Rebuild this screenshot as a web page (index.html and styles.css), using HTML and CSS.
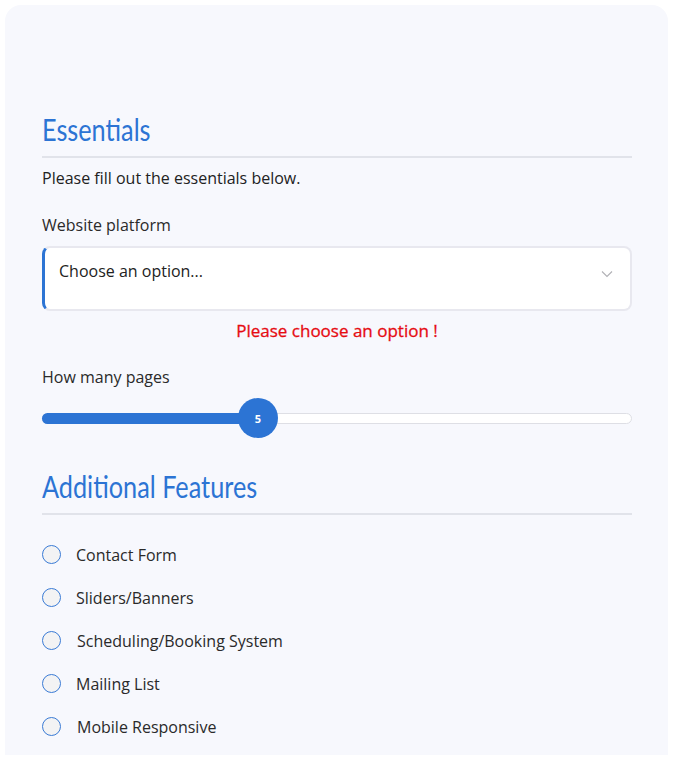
FILE: index.html
```html
<!DOCTYPE html>
<html>
<head>
<meta charset="utf-8">
<link rel="stylesheet" href="styles.css">
</head>
<body>
<div class="card">
  <h2 class="heading"><span class="heading-text">Essentials</span></h2>
  <p class="intro">Please fill out the essentials below.</p>
  <label class="label">Website platform</label>
  <div class="select">
    <span>Choose an option...</span>
    <svg class="chev" width="12" height="8" viewBox="0 0 12 8"><path d="M1 1.5 L6 6.5 L11 1.5" fill="none" stroke="#b0b0b5" stroke-width="1.1"/></svg>
  </div>
  <div class="error">Please choose an option !</div>
  <label class="label pages">How many pages</label>
  <div class="slider">
    <div class="fill" style="width:36.3%"></div>
    <div class="thumb">5</div>
  </div>
  <h2 class="heading second"><span class="heading-text">Additional Features</span></h2>
  <ul class="options">
    <li><span class="radio"></span><span>Contact Form</span></li>
    <li><span class="radio"></span><span>Sliders/Banners</span></li>
    <li><span class="radio"></span><span class="shift">Scheduling/Booking System</span></li>
    <li><span class="radio"></span><span>Mailing List</span></li>
    <li><span class="radio"></span><span class="shift">Mobile Responsive</span></li>
  </ul>
</div>
</body>
</html>
```
FILE: styles.css
```css
html, body {
  margin: 0;
  padding: 0;
  background: #ffffff;
}
body {
  padding: 5px 7px 0 5px;
  font-family: "Open Sans", "Noto Sans", sans-serif;
  color: #222;
}
.card {
  background: #f7f8fd;
  border-radius: 16px 16px 0 0;
  height: 750px;
  padding: 106px 36px 0 37px;
  box-sizing: border-box;
}
.heading {
  margin: 0;
  font-family: "Lato", sans-serif;
  font-weight: 400;
  font-size: 31px;
  line-height: 36px;
  color: #2c74d4;
  padding-bottom: 9px;
  border-bottom: 2px solid #e1e3ea;
}
.heading-text {
  display: inline-block;
  transform: scaleX(0.815);
  transform-origin: left center;
  white-space: nowrap;
}
.intro {
  margin: 9px 0 0;
  font-size: 16px;
  line-height: 22px;
}
.label {
  display: block;
  font-size: 16px;
  line-height: 22px;
  margin-top: 25px;
  color: #2a2a2a;
}
.select {
  margin-top: 10px;
  height: 65px;
  box-sizing: border-box;
  background: #fff;
  border: 2px solid #e8e8ef;
  border-left: 3px solid #2c74d4;
  border-radius: 8px;
  display: flex;
  justify-content: space-between;
  align-items: flex-start;
  padding: 12px 17px 0 14px;
  font-size: 16px;
  line-height: 22px;
  color: #222;
}
.chev {
  margin-top: 10px;
}
.error {
  text-align: center;
  color: #e60b12;
  font-size: 17px;
  font-weight: 400;
  -webkit-text-stroke: 0.3px #e60b12;
  line-height: 22px;
  margin-top: 9px;
}
.pages {
  margin-top: 24px;
}
.slider {
  position: relative;
  margin-top: 25px;
  height: 11px;
  background: #fff;
  border: 1px solid #dedfe5;
  border-radius: 6px;
  box-sizing: border-box;
}
.fill {
  position: absolute;
  left: -1px;
  top: -1px;
  height: 11px;
  background: #2c74d4;
  border-radius: 6px 0 0 6px;
}
.thumb {
  position: absolute;
  left: 195px;
  top: -16px;
  width: 40px;
  height: 40px;
  border-radius: 50%;
  background: #2c74d4;
  color: #fff;
  font-size: 11px;
  font-weight: 700;
  display: flex;
  align-items: center;
  justify-content: center;
}
.second {
  margin-top: 44px;
}
.options {
  list-style: none;
  margin: 18px 0 0;
  padding: 0;
}
.options li {
  display: flex;
  align-items: center;
  height: 43px;
  font-size: 16px;
  color: #2a2a2a;
}
.radio {
  width: 17px;
  height: 17px;
  border: 1.5px solid #3a7bd5;
  border-radius: 50%;
  background: #f3f3f4;
  margin-right: 15px;
  flex: none;
}
.shift {
  margin-left: 1px;
}
```
